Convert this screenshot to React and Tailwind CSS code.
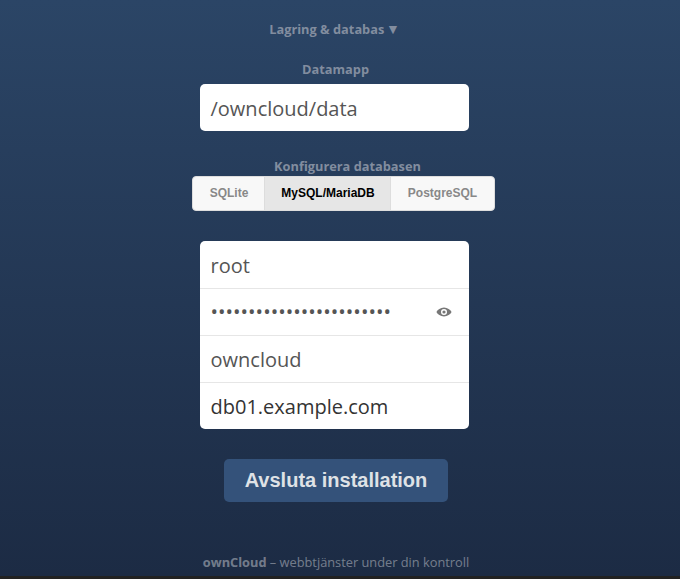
import React from 'react';
const font = { fontFamily: '"Open Sans","Noto Sans",sans-serif' };
function Eye() {
  return (
    <svg width="16" height="16" viewBox="0 0 16 16" className="absolute left-[236px] top-[63px]">
      <path fill="#777" fillRule="evenodd" d="M8 3.5C4.5 3.5 1.6 5.7.4 8c1.2 2.3 4.1 4.5 7.6 4.5s6.4-2.2 7.6-4.5C14.4 5.7 11.5 3.5 8 3.5zM8 5a3 3 0 1 1 0 6 3 3 0 0 1 0-6zm0 1.4a1.6 1.6 0 1 0 0 3.2 1.6 1.6 0 0 0 0-3.2z" />
    </svg>
  );
}
export default function App() {
  return (
    <div style={font} className="h-[579px] w-[680px] overflow-hidden bg-[#222] flex flex-col">
      <div className="h-[576px] w-full bg-gradient-to-b from-[#2b4566] to-[#1c2b44]">
        <div className="w-[669px] flex flex-col items-center">
          <div className="pt-[20px] h-[61px] text-[12.8px] font-bold leading-[18px] text-[#828d9f] whitespace-nowrap">Lagring &amp; databas<span className="text-[14px] [word-spacing:-2px]"> ▼</span></div>
          <div className="h-[23px] ml-[2px] text-[12.8px] font-bold leading-[16px] text-[#828d9f] whitespace-nowrap">Datamapp</div>
          <div className="w-[269px] h-[47px] bg-white rounded-[5px] pl-[10.5px] text-[20px] leading-[50px] text-[#555]">/owncloud/data</div>
          <div className="mt-[26px] h-[19px] text-[12.8px] font-bold leading-[18px] text-[#828d9f] ml-[26px] whitespace-nowrap">Konfigurera databasen</div>
          <div className="ml-[18px] flex w-[303px] h-[35px] rounded-[4px] border border-[#ddd] bg-[#f8f8f8] text-[12px] font-bold leading-[32px] text-center overflow-hidden" style={{ fontFamily: '"Liberation Sans",sans-serif' }}>
            <div className="w-[72px] pl-[1px] text-[#888] border-r border-[#ddd]">SQLite</div>
            <div className="w-[126px] pl-[1px] text-black bg-[#e6e6e6] border-r border-[#ddd]">MySQL/MariaDB</div>
            <div className="flex-1 text-[#888]">PostgreSQL</div>
          </div>
          <div className="relative mt-[30px] w-[269px] h-[188px] bg-white rounded-[5px] flex flex-col text-[20px] text-[#555]">
            <div className="h-[48px] pl-[10.5px] leading-[50px] border-b border-[#e6e6e6]">root</div>
            <div className="h-[47px] pl-[10.5px] leading-[46px] border-b border-[#e6e6e6] text-[#555] whitespace-nowrap">••••••••••••••••••••••••</div>
            <div className="h-[47px] pl-[10.5px] leading-[48px] border-b border-[#e6e6e6]">owncloud</div>
            <div className="h-[46px] pl-[10.5px] leading-[48px] text-[#333]">db01.example.com</div>
            <Eye />
          </div>
          <div className="mt-[30px] w-[224px] h-[43px] rounded-[5px] bg-[#34527a] text-center text-[20px] font-bold leading-[42px] text-[#dfe2e6] ml-[3px]" style={{ fontFamily: '"Liberation Sans",sans-serif' }}>Avsluta installation</div>
          <div className="mt-[51px] ml-[3px] text-[12.8px] leading-[18px] text-white/40 whitespace-nowrap"><b className="font-bold">ownCloud</b> – webbtjänster under din kontroll</div>
        </div>
      </div>
    </div>
  );
}
